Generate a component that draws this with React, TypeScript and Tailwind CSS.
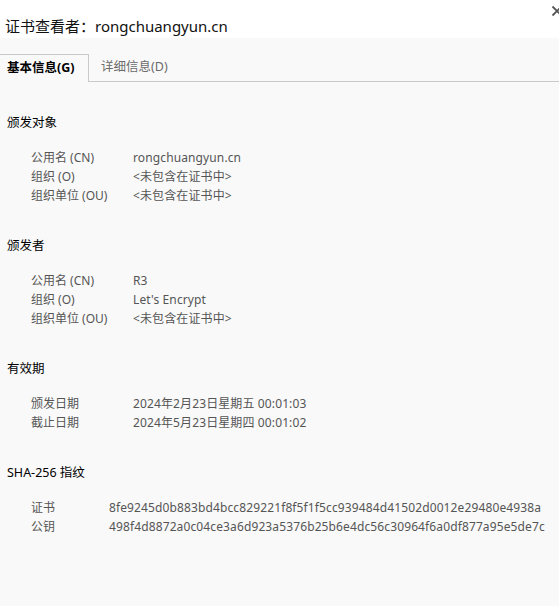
import React from "react";

type Row = { label: string; value: string };
type Section = { title: string; rows: Row[]; labelWidth: string };

const sections: Section[] = [
  {
    title: "颁发对象",
    labelWidth: "w-[102px]",
    rows: [
      { label: "公用名 (CN)", value: "rongchuangyun.cn" },
      { label: "组织 (O)", value: "<未包含在证书中>" },
      { label: "组织单位 (OU)", value: "<未包含在证书中>" },
    ],
  },
  {
    title: "颁发者",
    labelWidth: "w-[102px]",
    rows: [
      { label: "公用名 (CN)", value: "R3" },
      { label: "组织 (O)", value: "Let's Encrypt" },
      { label: "组织单位 (OU)", value: "<未包含在证书中>" },
    ],
  },
  {
    title: "有效期",
    labelWidth: "w-[102px]",
    rows: [
      { label: "颁发日期", value: "2024年2月23日星期五 00:01:03" },
      { label: "截止日期", value: "2024年5月23日星期四 00:01:02" },
    ],
  },
  {
    title: "SHA-256 指纹",
    labelWidth: "w-[78px]",
    rows: [
      { label: "证书", value: "8fe9245d0b883bd4bcc829221f8f5f1f5cc939484d41502d0012e29480e4938a" },
      { label: "公钥", value: "498f4d8872a0c04ce3a6d923a5376b25b6e4dc56c30964f6a0df877a95e5de7c" },
    ],
  },
];

const App: React.FC = () => {
  return (
    <div
      className="w-[559px] h-[606px] overflow-hidden bg-[#f9f9f9] relative"
      style={{ fontFamily: '"Noto Sans", "Noto Sans CJK SC", sans-serif' }}
    >
      {/* title bar */}
      <div className="h-[38px] bg-white pt-[16px] pl-[5px]">
        <p className="text-[15px] leading-[21px] text-[#111]">证书查看者：rongchuangyun.cn</p>
      </div>
      <button className="absolute top-[5px] right-[-4px] text-[#555]">
        <svg width="12" height="12" viewBox="0 0 12 12">
          <path d="M1.5 1.5 L10.5 10.5 M10.5 1.5 L1.5 10.5" stroke="currentColor" strokeWidth="1.8" />
        </svg>
      </button>

      {/* tabs */}
      <div className="mt-[16px] flex h-[28px]">
        <div className="w-[89px] border-t border-r border-[#c9c9c9] pl-[7px] flex items-center">
          <span className="text-[12.5px] font-bold text-black">基本信息(G)</span>
        </div>
        <div className="flex-1 border-b border-[#c9c9c9] pl-[12px] flex items-center">
          <span className="text-[12.5px] text-[#6b6b6b]">详细信息(D)</span>
        </div>
      </div>

      {/* body */}
      <div className="pt-[31px] pl-[7px]">
        {sections.map((s) => (
          <div key={s.title} className="mb-[31px]">
            <p className="text-[12.5px] leading-[19px] text-black mb-[16px]">{s.title}</p>
            <div className="pl-[24px]">
              {s.rows.map((r) => (
                <div key={r.label} className="flex text-[12px] leading-[19px] text-[#555]">
                  <span className={`${s.labelWidth} shrink-0`}>{r.label}</span>
                  <span className="whitespace-nowrap tracking-[0.12px]">{r.value}</span>
                </div>
              ))}
            </div>
          </div>
        ))}
      </div>
    </div>
  );
};

export default App;
